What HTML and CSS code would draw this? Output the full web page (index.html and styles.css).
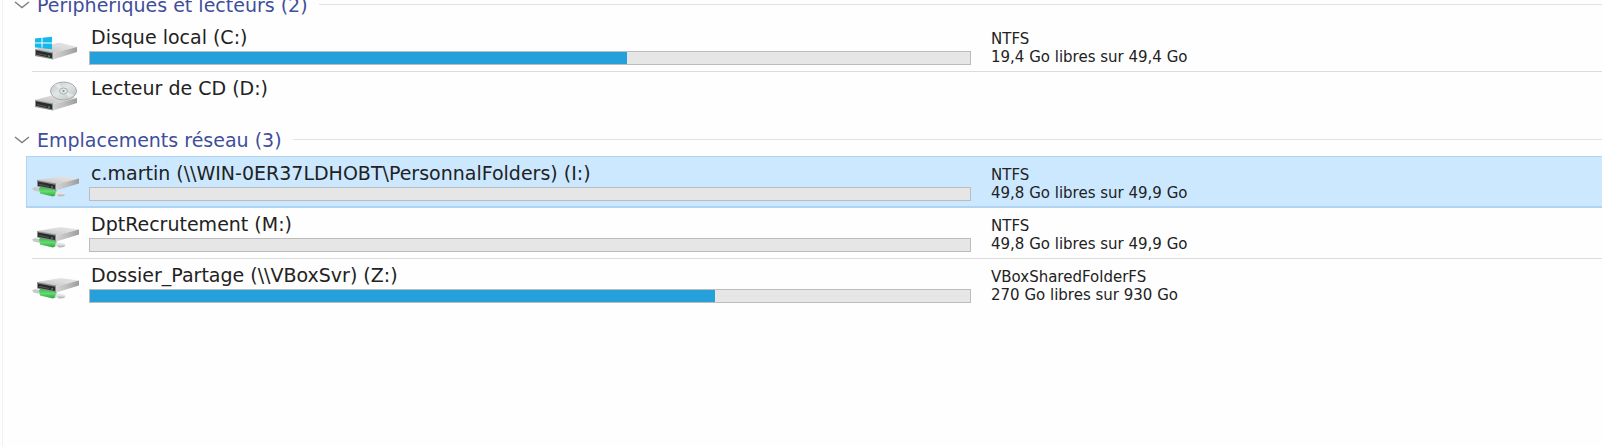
FILE: index.html
```html
<!DOCTYPE html>
<html lang="fr">
<head>
<meta charset="utf-8">
<title>Ce PC</title>
<link rel="stylesheet" href="styles.css">
</head>
<body>
<svg class="defs" aria-hidden="true">
  <defs>
    <linearGradient id="top" x1="0" x2="1" y1="1" y2="0"><stop offset="0" stop-color="#bdbdbd"/><stop offset=".6" stop-color="#dcdcdc"/><stop offset="1" stop-color="#e6e6e6"/></linearGradient>
    <linearGradient id="side" x1="0" x2="1"><stop offset="0" stop-color="#d2d2d2"/><stop offset=".5" stop-color="#bcbcbc"/><stop offset="1" stop-color="#9c9c9c"/></linearGradient>
    <linearGradient id="disc" x1="0" x2="1" y1="0" y2="1"><stop offset="0" stop-color="#bcc2c4"/><stop offset=".45" stop-color="#e2e6e7"/><stop offset="1" stop-color="#b8bfc1"/></linearGradient>
    <linearGradient id="green" x1="0" x2="0" y1="0" y2="1"><stop offset="0" stop-color="#35b745"/><stop offset=".5" stop-color="#62dc70"/><stop offset="1" stop-color="#2fa23e"/></linearGradient>
    <g id="drive">
      <path fill="url(#top)" d="M3 19 25 13Q27 12.600 29 13L45 17 21 23Z"/>
      <path fill="url(#side)" d="M21 23 45 17V22L21 29.500Z"/>
      <path fill="#8e8e8e" d="M3 19 21 22.500V29.500L3 26Z"/>
      <path fill="#292b2c" d="M4 20.300 20 23.600V28.200L4 24.800Z"/>
      <path fill="#505454" d="M5 23 15 25.200V26.200L5 24Z"/>
      <path fill="#3fa65b" d="M16 25.200 18 25.700V26.900L16 26.400Z"/>
    </g>
    <g id="netdrive">
      <path fill="#c5caca" d="M0 22.500 3 21 9 22.500V26L2 24.700Z"/>
      <path fill="url(#green)" d="M7 22 9 20.500 25 24 24 29 21 30.500 8 27.500Z"/>
      <path fill="#e0e4e4" d="M24 25.500 32 26.500Q35 28 32 30L27 30.500 23 29Z"/>
      <path fill="#b6bcbc" d="M25 28.500 33 28.500 32 30 27 30.500Z"/>
      <path fill="url(#top)" d="M5 14 26 10.500Q28 10 30 10.300L47 12.500 24 18.500Z"/>
      <path fill="url(#side)" d="M24 18.500 47 12.500V17.500L24 24.500Z"/>
      <path fill="#8d8d8d" d="M5 14 24 17.500V24.500L5 20.500Z"/>
      <path fill="#292b2c" d="M6 15.500 23 18.700V23L6 19.700Z"/>
      <path fill="#505454" d="M7 17.800 17 20V21L7 18.900Z"/>
      <path fill="#3fa65b" d="M19 20.200 21 20.600V21.800L19 21.400Z"/>
    </g>
  </defs>
</svg>
<main class="pane">
  <section class="group">
    <h2 class="group-title"><button class="toggle" type="button" aria-expanded="true"><svg class="chevron" viewBox="0 0 16 8" aria-hidden="true"><path d="M1 1 8 6.500 15 1"/></svg>Périphériques et lecteurs (2)</button></h2>
    <ul class="drives">
      <li class="drive">
        <svg class="icon" viewBox="0 0 48 36" aria-hidden="true"><use href="#drive"/><path fill="#12b9ea" d="M3 8.500 9.500 7.800V12.500H3ZM10.500 7.700 20 6.800V12.500H10.500ZM3 13.500H9.500V18L3 17.400ZM10.500 13.500H20V19.200L10.500 18.200Z"/></svg>
        <div class="body"><label class="name" for="disk-c">Disque local (C:)</label><progress class="usage" id="disk-c" max="100" value="61"></progress></div>
        <div class="details"><span>NTFS</span><span>19,4 Go libres sur 49,4 Go</span></div>
      </li>
      <li class="drive">
        <svg class="icon" viewBox="0 0 48 36" aria-hidden="true"><use href="#drive"/><ellipse cx="31.500" cy="10" rx="13" ry="9" fill="url(#disc)" stroke="#a5abad"/><path fill="#fff" opacity=".45" d="M31 10 22 4 27 2ZM32 10 42 14 37 17Z"/><ellipse cx="31.500" cy="10" rx="4" ry="3" fill="#e2e6e6" stroke="#a9afb1"/><ellipse cx="31.500" cy="10" rx="1.200" ry="1" fill="#8b9193"/></svg>
        <div class="body"><span class="name">Lecteur de CD (D:)</span></div>
      </li>
    </ul>
  </section>
  <section class="group">
    <h2 class="group-title"><button class="toggle" type="button" aria-expanded="true"><svg class="chevron" viewBox="0 0 16 8" aria-hidden="true"><path d="M1 1 8 6.500 15 1"/></svg>Emplacements réseau (3)</button></h2>
    <ul class="drives">
      <li class="drive selected">
        <svg class="icon" viewBox="0 0 48 36" aria-hidden="true"><use href="#netdrive"/></svg>
        <div class="body"><label class="name" for="disk-i">c.martin (\\WIN-0ER37LDHOBT\PersonnalFolders) (I:)</label><progress class="usage" id="disk-i" max="100" value="0"></progress></div>
        <div class="details"><span>NTFS</span><span>49,8 Go libres sur 49,9 Go</span></div>
      </li>
      <li class="drive">
        <svg class="icon" viewBox="0 0 48 36" aria-hidden="true"><use href="#netdrive"/></svg>
        <div class="body"><label class="name" for="disk-m">DptRecrutement (M:)</label><progress class="usage" id="disk-m" max="100" value="0"></progress></div>
        <div class="details"><span>NTFS</span><span>49,8 Go libres sur 49,9 Go</span></div>
      </li>
      <li class="drive">
        <svg class="icon" viewBox="0 0 48 36" aria-hidden="true"><use href="#netdrive"/></svg>
        <div class="body"><label class="name" for="disk-z">Dossier_Partage (\\VBoxSvr) (Z:)</label><progress class="usage" id="disk-z" max="100" value="71"></progress></div>
        <div class="details"><span>VBoxSharedFolderFS</span><span>270 Go libres sur 930 Go</span></div>
      </li>
    </ul>
  </section>
</main>
</body>
</html>
```
FILE: styles.css
```css
* { box-sizing: border-box; }

body {
  margin: 0;
  min-height: 100vh;
  display: flex;
  overflow: hidden;
  background: #fefefe;
  color: #222;
  font-family: "DejaVu Sans", "Noto Sans", sans-serif;
}

.defs { position: absolute; width: 0; height: 0; }

/* The list is scrolled a little, so the first heading is partly hidden. */
.pane {
  flex: 1;
  min-width: 0;
  margin: -12px 0 0 2px;
  border-left: 1px solid #f0f0f0;
}

.group-title {
  display: flex;
  align-items: center;
  gap: 11px;
  height: 33px;
  margin: 0;
  padding-left: 11px;
}

.group-title::after {
  content: "";
  flex: 1;
  height: 1px;
  background: #e2e2e2;
}

.toggle {
  display: flex;
  align-items: center;
  gap: 7px;
  padding: 0;
  border: 0;
  background: none;
  color: #3f4e9c;
  font: 19px/24px "DejaVu Sans", "Noto Sans", sans-serif;
  white-space: nowrap;
}

.chevron {
  width: 16px;
  height: 8px;
  fill: none;
  stroke: #808080;
  stroke-width: 1.5;
}

.drives {
  margin: 0 0 0 23px;
  padding: 0;
  list-style: none;
}

.drive {
  position: relative;
  display: grid;
  grid-template-columns: 48px minmax(0, 891fr) minmax(0, 631fr);
  height: 51px;
  padding-left: 6px;
}

.drive:not(:last-child)::after {
  content: "";
  position: absolute;
  inset: auto 0 0 6px;
  height: 1px;
  background: #dcdcdc;
}

.drive.selected {
  height: 52px;
  background: #cce8ff;
  border: 1px solid #b0d4f2;
  border-right: 0;
  border-bottom-width: 2px;
  padding-left: 5px;
}

.drive.selected::after { display: none; }

.icon { width: 48px; height: 36px; margin-top: 9px; }

.body {
  display: flex;
  flex-direction: column;
  padding: 4px 0 0 9px;
}

.name {
  padding-left: 2px;
  font-size: 19px;
  line-height: 24px;
  white-space: nowrap;
}

.usage {
  appearance: none;
  width: 100%;
  height: 14px;
  margin-top: 2px;
  border: 1px solid #bcbcbc;
  background: #e6e6e6;
}

.usage::-webkit-progress-bar { background: #e6e6e6; }
.usage::-webkit-progress-value { background: #26a0da; }
.usage::-moz-progress-bar { background: #26a0da; }

.details {
  display: flex;
  flex-direction: column;
  padding: 9px 0 0 20px;
  font-size: 15px;
  line-height: 18px;
  white-space: nowrap;
}
```
